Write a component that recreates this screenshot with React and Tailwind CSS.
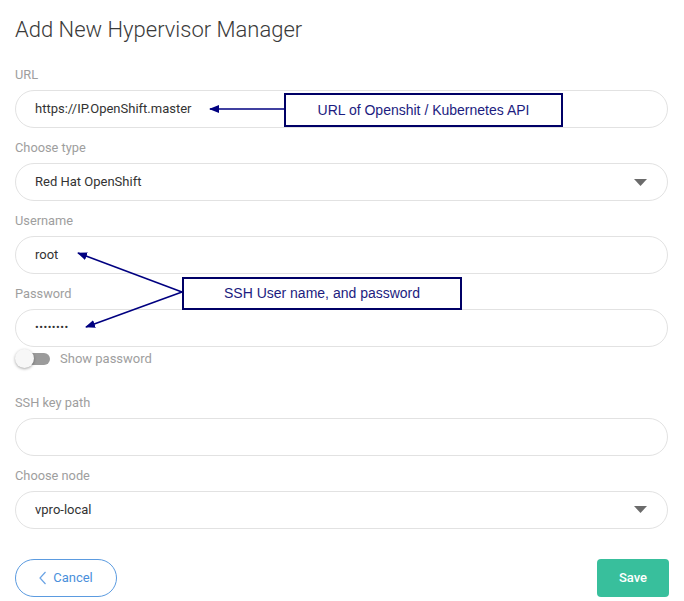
import React from "react";

const Label = ({ children }) => (
  <div className="mb-[7px] text-[12.8px] leading-[16px] text-[#9e9e9e]">{children}</div>
);

const TextInput = ({ value }) => (
  <div className="flex h-[38px] items-center rounded-full border border-[#e2e2e2] bg-white pl-[19px] text-[13px] text-[#333]">
    {value}
  </div>
);

const SelectInput = ({ value }) => (
  <div className="flex h-[38px] items-center justify-between rounded-full border border-[#e2e2e2] bg-white pl-[19px] pr-[20px] text-[13px] text-[#333]">
    <span>{value}</span>
    <svg width="13" height="7" viewBox="0 0 13 7">
      <path d="M0 0 L13 0 L6.5 7 Z" fill="#6b6b6b" />
    </svg>
  </div>
);

const Field = ({ label, children, className = "" }) => (
  <div className={className}>
    <Label>{label}</Label>
    {children}
  </div>
);

export default function App() {
  return (
    <div
      className="relative h-[601px] w-[684px] overflow-hidden bg-white pl-[15px] pr-[16px]"
      style={{ fontFamily: "Roboto, 'Noto Sans', sans-serif" }}
    >
      <h1 className="pt-[16px] text-[22px] font-light leading-[28px] text-[#3a3a3a]">
        Add New Hypervisor Manager
      </h1>

      <Field label="URL" className="mt-[23px]">
        <TextInput value="https://IP.OpenShift.master" />
      </Field>
      <Field label="Choose type" className="mt-[12px]">
        <SelectInput value="Red Hat OpenShift" />
      </Field>
      <Field label="Username" className="mt-[12px]">
        <TextInput value="root" />
      </Field>
      <Field label="Password" className="mt-[12px]">
        <TextInput value={<span className="text-[11px] tracking-[0.5px]">••••••••</span>} />
      </Field>

      <div className="mt-[2px] flex items-center gap-[9px]">
        <div className="relative h-[19px] w-[36px]">
          <div className="absolute left-[12px] top-[4px] h-[12px] w-[23px] rounded-full bg-[#9b9b9b]" />
          <div className="absolute left-0 top-0 h-[19px] w-[19px] rounded-full bg-[#f7f7f7] shadow-[0_1px_3px_rgba(0,0,0,0.35)]" />
        </div>
        <span className="text-[13px] text-[#9e9e9e]">Show password</span>
      </div>

      <Field label="SSH key path" className="mt-[26px]">
        <TextInput value="" />
      </Field>
      <Field label="Choose node" className="mt-[12px]">
        <SelectInput value="vpro-local" />
      </Field>

      <div className="mt-[30px] flex items-center justify-between">
        <button
          type="button"
          className="flex h-[38px] w-[102px] items-center justify-center gap-[6px] rounded-full border border-[#5b9be0] text-[13px] text-[#4a8fdb]"
        >
          <svg width="8" height="14" viewBox="0 0 8 14">
            <path d="M6.5 1 L1 7 L6.5 13" fill="none" stroke="#6aa3e4" strokeWidth="1.2" />
          </svg>
          Cancel
        </button>
        <button
          type="button"
          className="mr-[-1px] h-[38px] w-[72px] rounded-[4px] bg-[#38bf9c] text-[13px] font-medium text-white"
        >
          Save
        </button>
      </div>

      {/* annotations */}
      <svg className="pointer-events-none absolute left-0 top-0" width="684" height="601">
        <defs>
          <marker id="ah" markerWidth="10" markerHeight="8" refX="9" refY="4" orient="auto" markerUnits="userSpaceOnUse">
            <path d="M0 0 L10 4 L0 8 Z" fill="#000080" />
          </marker>
        </defs>
        <line x1="284" y1="109" x2="210" y2="109" stroke="#000080" strokeWidth="1.6" markerEnd="url(#ah)" />
        <line x1="182" y1="292" x2="78" y2="253" stroke="#000080" strokeWidth="1.6" markerEnd="url(#ah)" />
        <line x1="182" y1="292" x2="86" y2="327" stroke="#000080" strokeWidth="1.6" markerEnd="url(#ah)" />
      </svg>
      <div
        className="absolute left-[284px] top-[93px] flex h-[34px] w-[279px] items-center justify-center border-2 border-[#000066] bg-white text-[14px] text-[#1c1c80]"
        style={{ fontFamily: "'Liberation Sans', Arial, sans-serif" }}
      >
        URL of Openshit / Kubernetes API
      </div>
      <div
        className="absolute left-[182px] top-[277px] flex h-[33px] w-[280px] items-center justify-center border-2 border-[#000066] bg-white text-[14px] text-[#1c1c80]"
        style={{ fontFamily: "'Liberation Sans', Arial, sans-serif" }}
      >
        SSH User name, and password
      </div>
    </div>
  );
}
